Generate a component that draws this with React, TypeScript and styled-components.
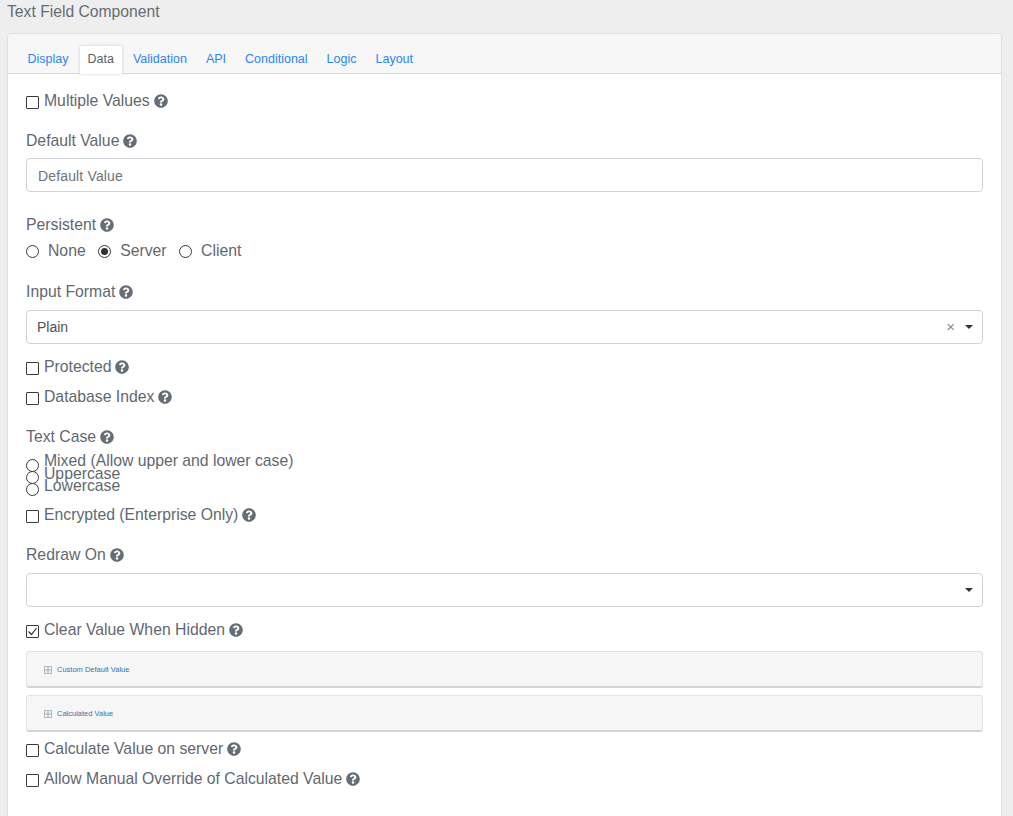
import React from "react";
import styled, { createGlobalStyle } from "styled-components";
import { FaQuestionCircle } from "react-icons/fa";

const GlobalStyle = createGlobalStyle`
  html, body {
    margin: 0;
    padding: 0;
    background: #eeeeee;
    overflow: hidden;
  }
  * {
    box-sizing: border-box;
  }
`;

const Page = styled.div`
  height: 816px;
  overflow: hidden;
  padding: 0 11px 0 7px;
  font-family: "Liberation Sans", Arial, sans-serif;
  font-size: 15.75px;
  color: #62686f;
`;

const Title = styled.h1`
  margin: 0;
  height: 33px;
  padding-top: 3px;
  font-size: 15.7px;
  line-height: 18px;
  font-weight: 400;
  color: #666c73;
`;

const Card = styled.div`
  background: #fff;
  border: 1px solid #dfdfdf;
  border-radius: 4px;
  min-height: 900px;
`;

const TabBar = styled.ul`
  display: flex;
  list-style: none;
  margin: 0;
  height: 40px;
  padding: 12px 10px 0;
  background: #f7f7f7;
  border-bottom: 1px solid #d9d9d9;
  border-radius: 4px 4px 0 0;
`;

const Tab = styled.li<{ $active?: boolean }>`
  height: 28px;
  margin: 0 1.5px;
  padding: 0 8px;
  font-size: 12.5px;
  line-height: 26px;
  color: ${(p) => (p.$active ? "#5a6068" : "#2a85f5")};
  background: ${(p) => (p.$active ? "#fff" : "transparent")};
  box-shadow: ${(p) => (p.$active ? "0 0 3px rgba(0,0,0,0.18)" : "none")};
`;

const Body = styled.div`
  padding: 12px 18px 0;
`;

const CheckRow = styled.label`
  display: flex;
  align-items: center;
  height: 30px;
`;

const Box = styled.span`
  flex: none;
  display: flex;
  align-items: center;
  justify-content: center;
  width: 13px;
  height: 13px;
  margin: 3px 5px 0 0;
  border: 1px solid #3a3a3a;
  border-radius: 1px;
  background: #fff;
`;

const Help = styled(FaQuestionCircle)`
  flex: none;
  width: 14px;
  height: 14px;
  margin-left: 4px;
  color: #666d75;
`;

const Field = styled.div<{ $top?: number; $bottom?: number }>`
  margin-top: ${(p) => p.$top ?? 0}px;
  margin-bottom: ${(p) => p.$bottom ?? 0}px;
`;

const Label = styled.div<{ $tight?: boolean }>`
  display: flex;
  align-items: center;
  height: 18px;
  margin-bottom: ${(p) => (p.$tight ? 8 : 9)}px;
`;

const InputBox = styled.div`
  display: flex;
  align-items: center;
  height: 34px;
  padding: 2px 11px 0;
  border: 1px solid #cfd2d6;
  border-radius: 4px;
  background: #fff;
  font-size: 14px;
  letter-spacing: 0.15px;
  color: #6e7479;
`;

const SelectBox = styled(InputBox)`
  padding: 0 9px 0 10px;
  letter-spacing: 0;
  color: #4b5158;
`;

const SelectValue = styled.span`
  flex: 1;
`;

const Clear = styled.span`
  margin-right: 10px;
  font-size: 15px;
  line-height: 14px;
  color: #8a8a8a;
`;

const Caret = styled.span`
  width: 0;
  height: 0;
  border-left: 4.5px solid transparent;
  border-right: 4.5px solid transparent;
  border-top: 4.5px solid #333;
`;

const RadioInline = styled.div`
  display: flex;
  gap: 12.5px;
  margin-top: -1px;
`;

const RadioOption = styled.label`
  display: flex;
  align-items: center;
  height: 18px;
`;

const RadioStack = styled.div`
  margin-bottom: 8px;
`;

const StackOption = styled.label`
  display: flex;
  align-items: center;
  height: 12.4px;
`;

const Circle = styled.span<{ $checked?: boolean; $gap: number; $drop: number }>`
  flex: none;
  display: flex;
  align-items: center;
  justify-content: center;
  width: 13px;
  height: 13px;
  margin-right: ${(p) => p.$gap}px;
  margin-top: ${(p) => p.$drop}px;
  border: 1px solid #3a3a3a;
  border-radius: 50%;
  background: #fff;
  &::after {
    content: "";
    display: ${(p) => (p.$checked ? "block" : "none")};
    width: 7px;
    height: 7px;
    border-radius: 50%;
    background: #333;
  }
`;

const PanelGroup = styled.div`
  display: flex;
  flex-direction: column;
  gap: 7px;
  margin: 6px 0 2px;
`;

const Panel = styled.div`
  display: flex;
  align-items: center;
  height: 37px;
  padding: 1px 0 0 17px;
  background: #f6f6f6;
  border: 1px solid #e3e3e3;
  border-bottom: 2px solid #d4d4d4;
  border-radius: 3px;
  font-size: 7.5px;
  color: #3f6fae;
`;

const PlusIcon = styled.svg`
  width: 8px;
  height: 8px;
  margin-right: 5px;
`;

const Plus = () => (
  <PlusIcon viewBox="0 0 8 8">
    <rect x="0.5" y="0.5" width="7" height="7" fill="none" stroke="#b3b9c2" />
    <path d="M1 4h6M4 1v6" stroke="#a0a7b2" />
  </PlusIcon>
);

const Check = () => (
  <svg width="11" height="11" viewBox="0 0 11 11">
    <path d="M1.5 5.5l3 3 5-6.5" fill="none" stroke="#333" strokeWidth="1.2" />
  </svg>
);

const CheckField = ({ label, checked }: { label: string; checked?: boolean }) => (
  <CheckRow>
    <Box>{checked && <Check />}</Box>
    {label}
    <Help />
  </CheckRow>
);

const tabs = ["Display", "Data", "Validation", "API", "Conditional", "Logic", "Layout"];

export default function App() {
  return (
    <Page>
      <GlobalStyle />
      <Title>Text Field Component</Title>
      <Card>
        <TabBar>
          {tabs.map((t) => (
            <Tab key={t} $active={t === "Data"}>
              {t}
            </Tab>
          ))}
        </TabBar>
        <Body>
          <CheckField label="Multiple Values" />

          <Field $top={16} $bottom={24}>
            <Label $tight>
              Default Value
              <Help />
            </Label>
            <InputBox>Default Value</InputBox>
          </Field>

          <Field $bottom={23}>
            <Label>
              Persistent
              <Help />
            </Label>
            <RadioInline>
              <RadioOption>
                <Circle $gap={9} $drop={0} />
                None
              </RadioOption>
              <RadioOption>
                <Circle $gap={9} $drop={0} $checked />
                Server
              </RadioOption>
              <RadioOption>
                <Circle $gap={9} $drop={0} />
                Client
              </RadioOption>
            </RadioInline>
          </Field>

          <Field $bottom={8}>
            <Label>
              Input Format
              <Help />
            </Label>
            <SelectBox>
              <SelectValue>Plain</SelectValue>
              <Clear>×</Clear>
              <Caret />
            </SelectBox>
          </Field>

          <CheckField label="Protected" />
          <CheckField label="Database Index" />

          <Field $top={16}>
            <Label>
              Text Case
              <Help />
            </Label>
            <RadioStack>
              <StackOption>
                <Circle $gap={5} $drop={8} />
                Mixed (Allow upper and lower case)
              </StackOption>
              <StackOption>
                <Circle $gap={5} $drop={8} />
                Uppercase
              </StackOption>
              <StackOption>
                <Circle $gap={5} $drop={8} />
                Lowercase
              </StackOption>
            </RadioStack>
          </Field>

          <CheckField label="Encrypted (Enterprise Only)" />

          <Field $top={16} $bottom={8}>
            <Label>
              Redraw On
              <Help />
            </Label>
            <SelectBox>
              <SelectValue />
              <Caret />
            </SelectBox>
          </Field>

          <CheckField label="Clear Value When Hidden" checked />

          <PanelGroup>
            <Panel>
              <Plus />
              Custom Default Value
            </Panel>
            <Panel>
              <Plus />
              Calculated Value
            </Panel>
          </PanelGroup>

          <CheckField label="Calculate Value on server" />
          <CheckField label="Allow Manual Override of Calculated Value" />
        </Body>
      </Card>
    </Page>
  );
}
